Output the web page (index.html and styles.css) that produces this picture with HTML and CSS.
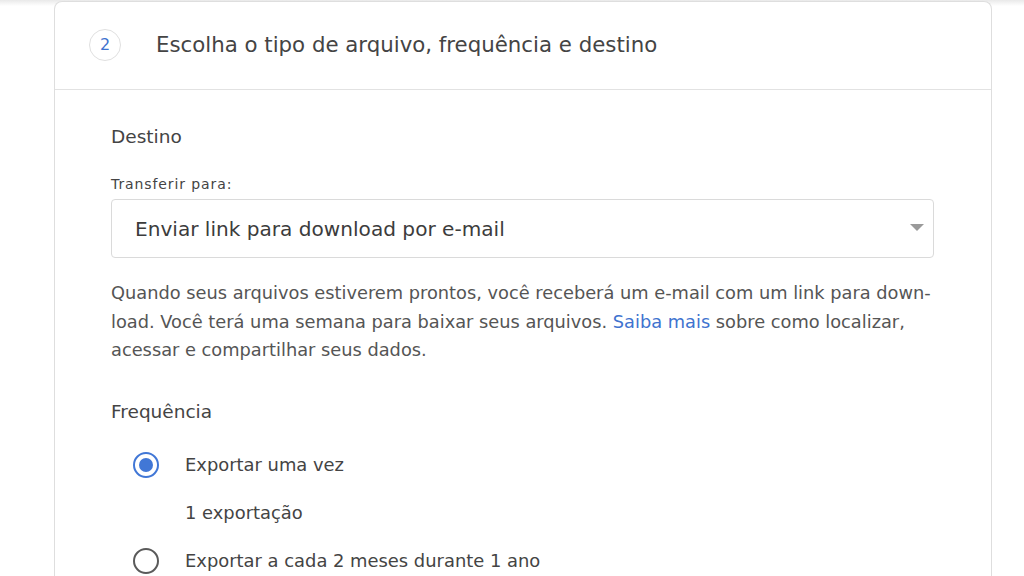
FILE: index.html
```html
<!DOCTYPE html>
<html lang="pt">
<head>
<meta charset="utf-8">
<link rel="stylesheet" href="styles.css">
</head>
<body>
<div class="page">
  <div class="card">
    <div class="card-head">
      <div class="step">2</div>
      <div class="title">Escolha o tipo de arquivo, frequência e destino</div>
    </div>
    <div class="card-body">
      <div class="section-title">Destino</div>
      <div class="field-label">Transferir para:</div>
      <div class="select">
        <span class="select-text">Enviar link para download por e-mail</span>
        <span class="arrow"></span>
      </div>
      <p class="desc">Quando seus arquivos estiverem prontos, você receberá um e-mail com um link para down&shy;load. Você terá uma semana para baixar seus arquivos. <a class="link">Saiba mais</a> sobre como localizar, acessar e compartilhar seus dados.</p>
      <div class="section-title freq">Frequência</div>
      <div class="radio-row first">
        <span class="radio checked"></span>
        <span class="radio-label">Exportar uma vez</span>
      </div>
      <div class="sub">1 exportação</div>
      <div class="radio-row">
        <span class="radio"></span>
        <span class="radio-label">Exportar a cada 2 meses durante 1 ano</span>
      </div>
    </div>
  </div>
</div>
</body>
</html>
```

FILE: styles.css
```css
html, body {
  margin: 0;
  padding: 0;
  background: #ffffff;
  overflow: hidden;
}
body {
  font-family: "DejaVu Sans", "Open Sans", sans-serif;
  color: #3c4043;
}
.page {
  width: 1024px;
  height: 576px;
  background: linear-gradient(#e9e9e9, #ffffff 6px);
  padding-top: 1px;
  box-sizing: border-box;
}
.card {
  margin-left: 54px;
  width: 938px;
  box-sizing: border-box;
  background: #fff;
  border: 1px solid #dedede;
  border-bottom: none;
  border-radius: 8px 8px 0 0;
  height: 600px;
}
.card-head {
  display: flex;
  align-items: center;
  height: 85px;
  border-bottom: 1px solid #e2e2e2;
  padding-left: 34px;
  padding-bottom: 2px;
}
.step {
  width: 32px;
  height: 32px;
  box-sizing: border-box;
  border: 1px solid #e0e0e0;
  border-radius: 50%;
  display: flex;
  align-items: center;
  justify-content: center;
  color: #3f73cf;
  font-size: 16px;
}
.title {
  margin-left: 35px;
  font-size: 21.3px;
  color: #444;
}
.card-body {
  padding: 35px 57px 0 56px;
}
.section-title {
  font-size: 18.5px;
  color: #444;
  line-height: 24px;
}
.field-label {
  margin-top: 26px;
  font-size: 14px;
  letter-spacing: 0.9px;
  color: #444;
  line-height: 18px;
}
.select {
  margin-top: 6px;
  height: 59px;
  box-sizing: border-box;
  border: 1px solid #dadada;
  border-radius: 4px;
  display: flex;
  align-items: center;
  justify-content: space-between;
  padding: 0 9px 0 23px;
}
.select-text {
  font-size: 20.1px;
  color: #3c3c3c;
}
.arrow {
  width: 0;
  height: 0;
  border-left: 7px solid transparent;
  border-right: 7px solid transparent;
  border-top: 7px solid #9a9a9a;
  margin-top: -2px;
}
.desc {
  margin: 21px 0 0;
  font-size: 17.8px;
  line-height: 28.5px;
  color: #555;
  hyphens: manual;
}
.link {
  color: #3f73cf;
}
.freq {
  margin-top: 35px;
}
.radio-row {
  display: flex;
  align-items: center;
  height: 48px;
}
.radio-row.first {
  margin-top: 17px;
}
.radio {
  width: 26px;
  height: 26px;
  box-sizing: border-box;
  border: 2px solid #5a5a5a;
  border-radius: 50%;
  margin-left: 22px;
  display: flex;
  align-items: center;
  justify-content: center;
}
.radio.checked {
  border-color: #4177d6;
}
.radio.checked::after {
  content: "";
  width: 14px;
  height: 14px;
  border-radius: 50%;
  background: #4177d6;
}
.radio-label {
  margin-left: 26px;
  font-size: 17.9px;
  color: #444;
}
.sub {
  margin-left: 74px;
  font-size: 17.9px;
  color: #444;
  line-height: 48px;
}
```
